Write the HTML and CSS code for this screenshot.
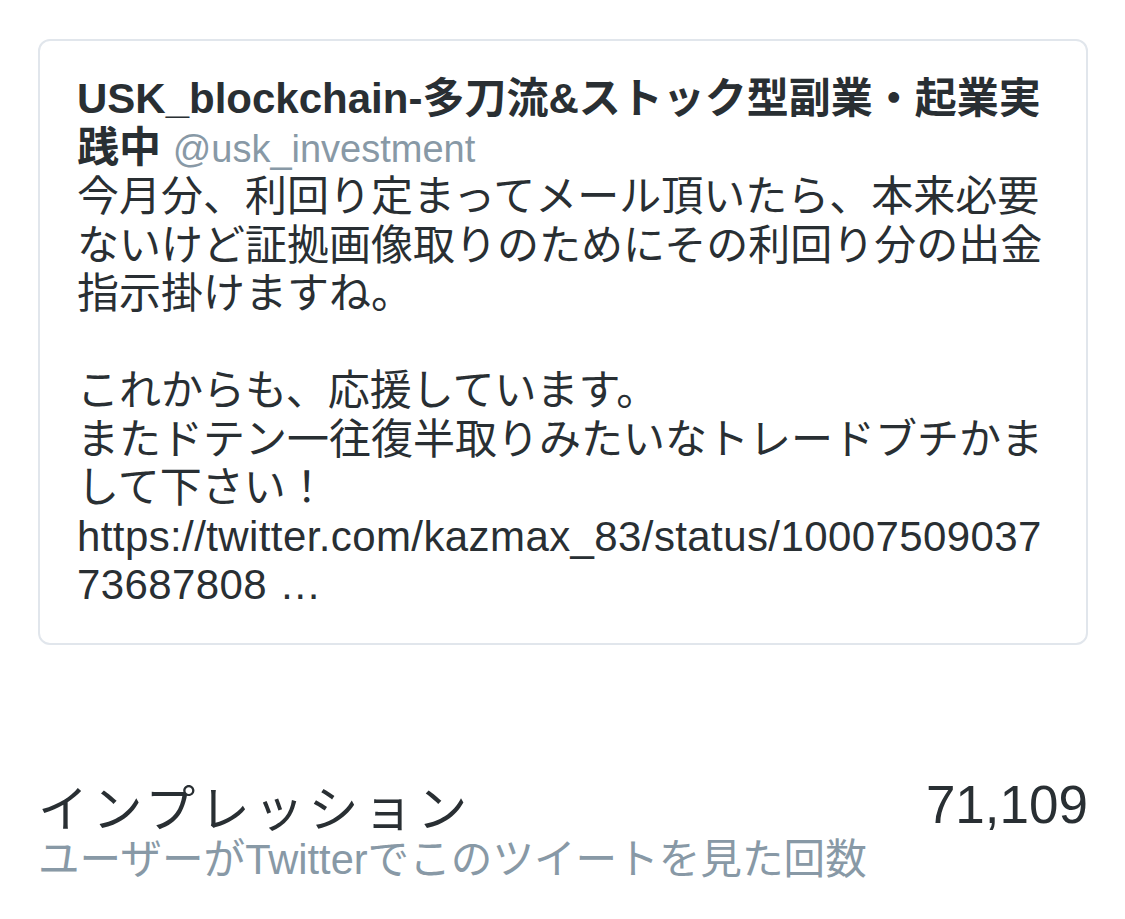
FILE: index.html
```html
<!DOCTYPE html>
<html lang="ja">
<head>
    <meta charset="UTF-8">
    <title>ツイートアクティビティ</title>
    <link rel="stylesheet" href="styles.css">
</head>
<body>
<div class="page">
    <div class="card">
        <div class="tweet">
            <span class="name">USK_blockchain-多刀流&amp;ストック型副業・起業実<br>践中</span>
            <span class="handle">@usk_investment</span><br>
            今月分、利回り定まってメール頂いたら、本来必要<br>
            ないけど証拠画像取りのためにその利回り分の出金<br>
            指示掛けますね。<br>
            <br>
            これからも、応援しています。<br>
            またドテン一往復半取りみたいなトレードブチかま<br>
            して下さい！<br>
            <span class="link">https://twitter.com/kazmax_83/status/10007509037<br>
            73687808 …</span>
        </div>
    </div>

    <div class="stat">
        <div class="stat-row">
            <div class="stat-title">インプレッション</div>
            <div class="stat-value">71,109</div>
        </div>
        <div class="stat-desc">ユーザーがTwitterでこのツイートを見た回数</div>
    </div>
</div>
</body>
</html>
```

FILE: styles.css
```css
* {
    margin: 0;
    padding: 0;
}

body {
    background: #ffffff;
    color: #292f33;
    font-family: "Liberation Sans", "Noto Sans CJK JP", sans-serif;
}

.page {
    padding: 39px 37px 0 38px;
}

.card {
    border: #e1e6ec solid 2px;
    border-radius: 12px;
    padding: 34px 20px 33px 37px;
}

.tweet {
    font-size: 42px;
    line-height: 48.5px;
    white-space: nowrap;
}

.name {
    font-weight: 700;
}

.handle {
    font-size: 38px;
    color: #8899a6;
}

.link {
    letter-spacing: 0.4px;
}

.stat {
    margin-top: 130px;
}

.stat-row {
    display: flex;
    justify-content: space-between;
    align-items: center;
    height: 60px;
}

.stat-title {
    font-size: 50px;
    letter-spacing: 4.4px;
}

.stat-value {
    font-size: 53px;
}

.stat-desc {
    margin-top: 0;
    font-size: 41.6px;
    line-height: 50px;
    color: #8899a6;
}
```
